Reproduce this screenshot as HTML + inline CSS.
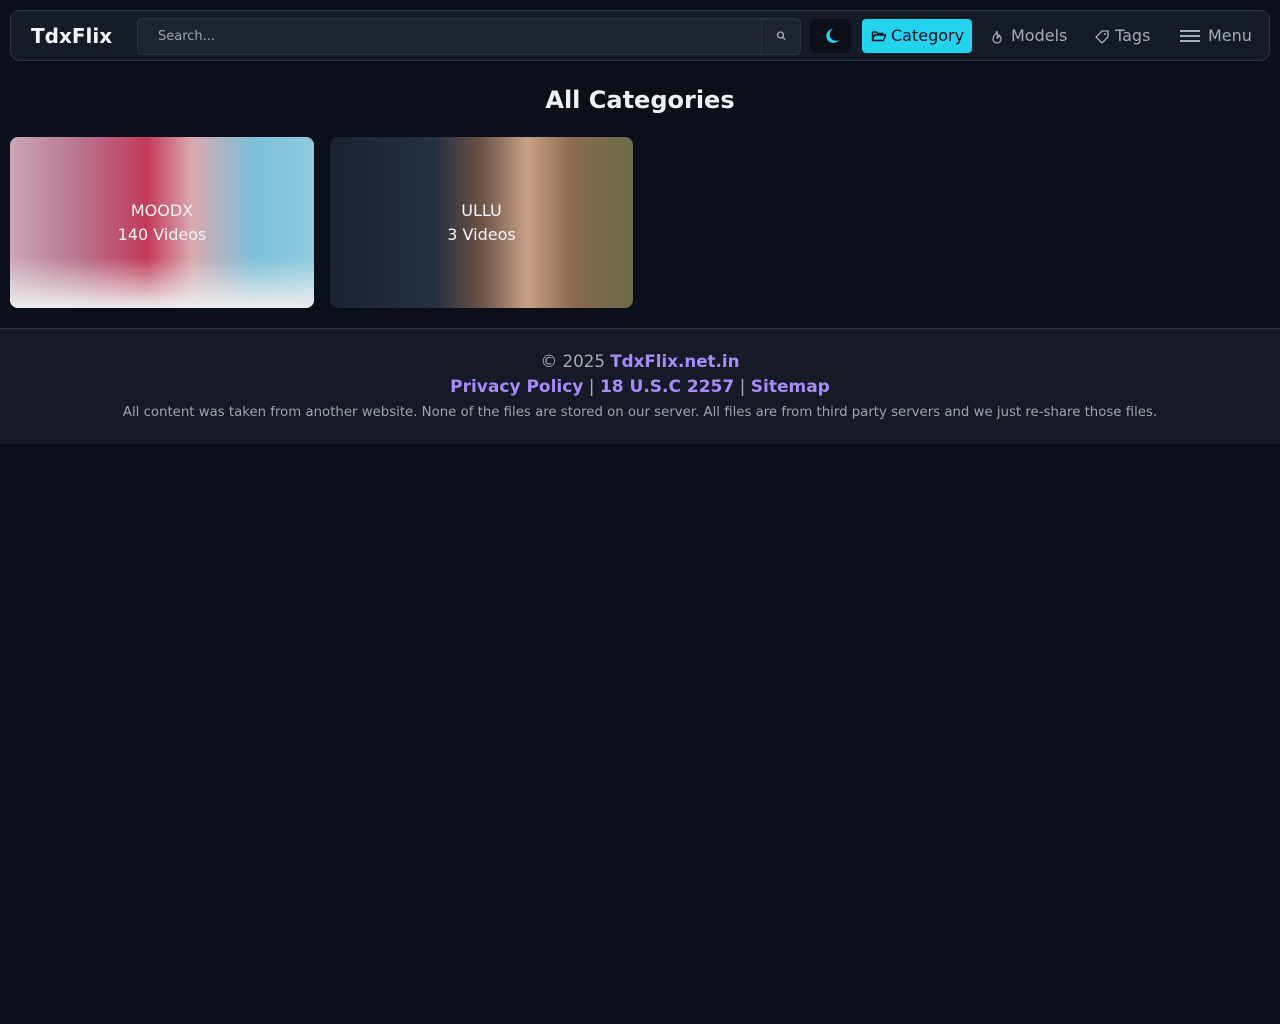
<!DOCTYPE html>
<html><head><meta charset="utf-8"><style>
*{box-sizing:border-box;margin:0;padding:0}
body{width:1280px;height:1024px;background:#0b0f1a;font-family:"DejaVu Sans","Liberation Sans",sans-serif;color:#e5e7eb;position:relative;overflow:hidden}
.nav{position:absolute;left:10px;top:10px;width:1260px;height:51px;background:#151a27;border:1px solid #2c3242;border-radius:10px}
.logo{position:absolute;left:20px;top:13px;font-weight:bold;font-size:20px;color:#f1f5f9}
.search{position:absolute;left:126px;top:7px;width:664px;height:37px;background:#1e2331;border:1px solid #2c3242;border-radius:5px}
.search span{position:absolute;left:20px;top:10px;font-size:13px;color:#9ca3af}
.sbtn{position:absolute;right:0;top:0;width:39px;height:35px;border-left:1px solid #2c3242}
.moon{position:absolute;left:799px;top:8px;width:41px;height:34px;background:#0b0f17;border-radius:6px}
.cat{position:absolute;left:851px;top:8px;width:110px;height:34px;background:#22d3ee;border-radius:4px;color:#0b1220;font-size:16px}
.item{position:absolute;top:15px;font-size:16px;color:#a3aab8}
h1{position:absolute;top:86px;width:100%;text-align:center;font-size:24px;font-weight:bold;color:#eef2f7}
.card{position:absolute;top:137px;height:171px;border-radius:8px;overflow:hidden}
.card .t{position:absolute;width:100%;top:62px;text-align:center;font-size:16px;line-height:24px;color:#f5f5f5}
.foot{position:absolute;top:328px;left:0;width:1280px;height:116px;background:#161a27;border-top:1px solid #2c3242;text-align:center}
.foot a{color:#a78bfa;font-weight:bold;text-decoration:none}
</style></head><body>
<div class="nav">
<div class="logo">TdxFlix</div>
<div class="search"><span>Search...</span><div class="sbtn"><svg width="39" height="35"><circle cx="18.5" cy="16" r="3" fill="none" stroke="#aab" stroke-width="1.3"/><line x1="20.5" y1="18" x2="23" y2="20.5" stroke="#aab" stroke-width="1.3"/></svg></div></div>
<div class="moon"><svg width="41" height="34"><path d="M23 10a7 7 0 1 0 6 11a6 6 0 0 1-6-11z" fill="#22d3ee"/></svg></div>
<div class="cat"><svg style="position:absolute;left:9px;top:10px" width="16" height="14"><path d="M1.5 3v8.5h11l2-5.5h-11l-2 5.5M1.5 3h4l1 1.5h5V6" fill="none" stroke="#0b1220" stroke-width="1.4"/></svg><span style="position:absolute;left:29px;top:7px">Category</span></div>
<svg style="position:absolute;left:979px;top:18px" width="14" height="16"><path d="M7 2c0 3-4 4-4 8a4 4 0 0 0 8 0c0-2-1-3-2-4c0 2-1 3-2 3c1-2 0-5 0-7z" fill="none" stroke="#a3aab8" stroke-width="1.3"/></svg>
<span class="item" style="left:1000px">Models</span>
<svg style="position:absolute;left:1083px;top:18px" width="16" height="16"><path d="M8 2h6v6l-6 6l-6-6z" fill="none" stroke="#a3aab8" stroke-width="1.3"/><circle cx="11" cy="5" r="1" fill="#a3aab8"/></svg>
<span class="item" style="left:1104px">Tags</span>
<svg style="position:absolute;left:1169px;top:18px" width="20" height="14"><path d="M0 2h20M0 7h20M0 12h20" stroke="#a3aab8" stroke-width="2"/></svg>
<span class="item" style="left:1197px">Menu</span>
</div>
<h1>All Categories</h1>
<div class="card" style="left:10px;width:304px;background:linear-gradient(90deg,#c9a8b8 0%,#b86f8a 25%,#c33a5a 45%,#d8aab0 60%,#7cc0d8 80%,#8fcbe0 100%)"><div style="position:absolute;left:0;bottom:0;width:100%;height:50px;background:linear-gradient(#ddd0,#eee)"></div><div class="t">MOODX<br>140 Videos</div></div>
<div class="card" style="left:330px;width:303px;background:linear-gradient(90deg,#1a2130 0%,#26303f 35%,#6b5345 50%,#c8a088 65%,#8a6a50 80%,#6a6a4a 100%)"><div class="t">ULLU<br>3 Videos</div></div>
<div class="foot">
<div style="position:absolute;top:22px;width:100%;font-size:16.7px;color:#a3aab8">© 2025 <a>TdxFlix.net.in</a></div>
<div style="position:absolute;top:48px;width:100%;font-size:17px;color:#a3aab8"><a>Privacy Policy</a> | <a>18 U.S.C 2257</a> | <a>Sitemap</a></div>
<div style="position:absolute;top:76px;width:100%;font-size:13.3px;color:#9ca3af">All content was taken from another website. None of the files are stored on our server. All files are from third party servers and we just re-share those files.</div>
</div>
</body></html>
